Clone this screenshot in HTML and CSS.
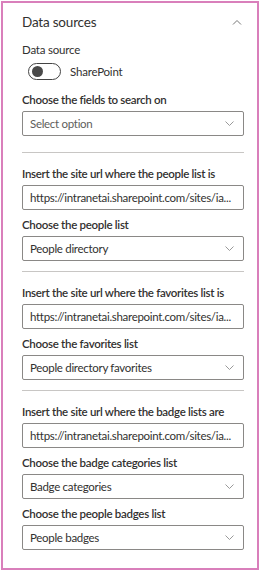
FILE: index.html
```html
<!DOCTYPE html>
<html>
<head>
<meta charset="utf-8"/>
<title>Data sources</title>
<link rel="stylesheet" href="styles.css">
</head>
<body>
<div class="panel">
  <div class="panel-head">
    <span class="panel-title">Data sources</span>
    <svg class="chev-up" width="10" height="6" viewBox="0 0 10 6"><path d="M1 5.5 L5 1.5 L9 5.5" fill="none" stroke="#777" stroke-width="1"/></svg>
  </div>

  <div class="plain-label">Data source</div>
  <div class="toggle-row">
    <span class="toggle"><span class="knob"></span></span>
    <span class="toggle-text">SharePoint</span>
  </div>

  <div class="label first">Choose the fields to search on</div>
  <div class="field select placeholder">Select option<svg class="chev" width="9" height="5" viewBox="0 0 9 5"><path d="M0.5 0.5 L4.5 4.5 L8.5 0.5" fill="none" stroke="#999" stroke-width="1"/></svg></div>

  <hr class="first">

  <div class="label">Insert the site url where the people list is</div>
  <div class="field">https://intranetai.sharepoint.com/sites/ia...</div>
  <div class="label">Choose the people list</div>
  <div class="field select">People directory<svg class="chev" width="9" height="5" viewBox="0 0 9 5"><path d="M0.5 0.5 L4.5 4.5 L8.5 0.5" fill="none" stroke="#999" stroke-width="1"/></svg></div>

  <hr>

  <div class="label">Insert the site url where the favorites list is</div>
  <div class="field">https://intranetai.sharepoint.com/sites/ia...</div>
  <div class="label">Choose the favorites list</div>
  <div class="field select">People directory favorites<svg class="chev" width="9" height="5" viewBox="0 0 9 5"><path d="M0.5 0.5 L4.5 4.5 L8.5 0.5" fill="none" stroke="#999" stroke-width="1"/></svg></div>

  <hr>

  <div class="label">Insert the site url where the badge lists are</div>
  <div class="field">https://intranetai.sharepoint.com/sites/ia...</div>
  <div class="label">Choose the badge categories list</div>
  <div class="field select">Badge categories<svg class="chev" width="9" height="5" viewBox="0 0 9 5"><path d="M0.5 0.5 L4.5 4.5 L8.5 0.5" fill="none" stroke="#999" stroke-width="1"/></svg></div>
  <div class="label">Choose the people badges list</div>
  <div class="field select">People badges<svg class="chev" width="9" height="5" viewBox="0 0 9 5"><path d="M0.5 0.5 L4.5 4.5 L8.5 0.5" fill="none" stroke="#999" stroke-width="1"/></svg></div>
</div>
</body>
</html>
```

FILE: styles.css
```css
body {
  margin: 0;
  background-color: white;
  font-family: Lato, "Liberation Sans", sans-serif;
  color: #323130;
}

.panel {
  box-sizing: border-box;
  width: 258px;
  height: 569px;
  margin: 1px 0 0 1px;
  border: 2px solid #d97fbb;
  padding: 0 13px 0 19px;
}

.panel-head {
  display: flex;
  justify-content: space-between;
  align-items: center;
  height: 20px;
  margin-top: 9px;
}

.panel-title {
  font-size: 13.5px;
  letter-spacing: -0.2px;
  line-height: 20px;
}

.chev-up {
  margin-right: 2px;
}

.plain-label {
  font-size: 11.5px;
  letter-spacing: -0.2px;
  line-height: 16px;
  margin-top: 10px;
}

.toggle-row {
  display: flex;
  align-items: center;
  margin-top: 5px;
  padding-left: 6px;
  height: 17px;
}

.toggle {
  box-sizing: border-box;
  display: flex;
  align-items: center;
  width: 33px;
  height: 17px;
  border: 1px solid #444;
  border-radius: 9px;
  padding-left: 3px;
}

.knob {
  width: 11px;
  height: 11px;
  border-radius: 50%;
  background-color: #4a4a4a;
}

.toggle-text {
  font-size: 11.5px;
  letter-spacing: -0.2px;
  margin-left: 9px;
}

.label {
  font-size: 11.5px;
  font-weight: 600;
  letter-spacing: -0.3px;
  line-height: 16px;
  margin-bottom: 3px;
  white-space: nowrap;
}

.label.first {
  margin-top: 12px;
}

.field {
  box-sizing: border-box;
  display: flex;
  align-items: center;
  justify-content: space-between;
  height: 25px;
  border: 1px solid #8a8886;
  border-radius: 2px;
  padding: 0 7px 0 7px;
  margin-bottom: 7px;
  font-size: 11.5px;
  letter-spacing: -0.3px;
  white-space: nowrap;
  overflow: hidden;
}

.select {
  padding-right: 9px;
}

.placeholder {
  color: #605e5c;
}

hr {
  border: none;
  border-top: 1px solid #c8c6c4;
  margin: 10px 0 13px;
}

hr.first {
  margin-top: 16px;
}
```
